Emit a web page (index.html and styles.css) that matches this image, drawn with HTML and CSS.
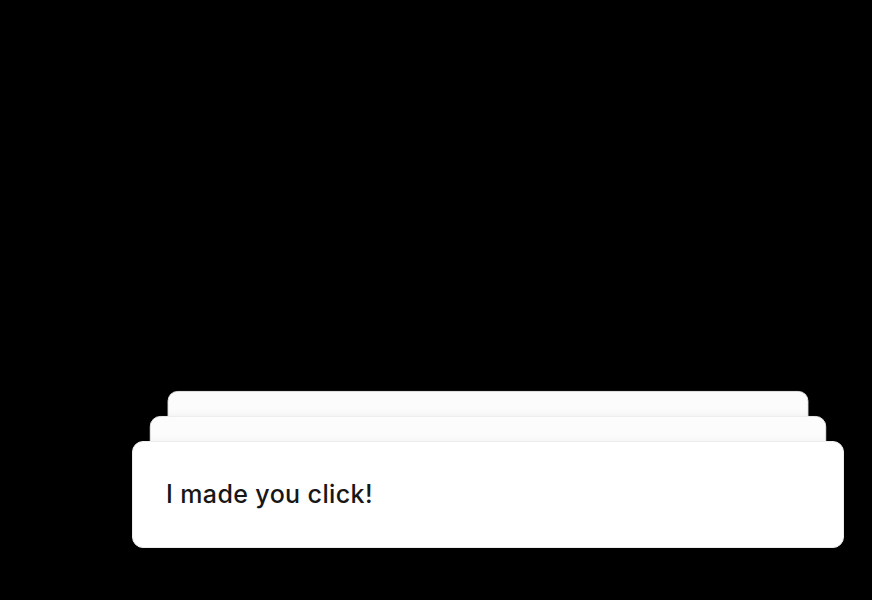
FILE: index.html
```html
<!DOCTYPE html>
<html>
<head>
<meta charset="utf-8">
<link rel="stylesheet" href="styles.css">
</head>
<body>
<main class="stage">
  <ol class="toaster">
    <li class="toast toast-back toast-3"></li>
    <li class="toast toast-back toast-2"></li>
    <li class="toast toast-front">I made you click!</li>
  </ol>
</main>
</body>
</html>
```
FILE: styles.css
```css
html, body {
  margin: 0;
  padding: 0;
  background: #000;
  height: 100%;
}
.stage {
  height: 600px;
  display: flex;
  flex-direction: column;
  justify-content: flex-end;
  padding: 0 28px 52px 132px;
  box-sizing: border-box;
}
.toaster {
  list-style: none;
  margin: 0;
  padding: 0;
  position: relative;
  width: 712px;
}
.toast {
  box-sizing: border-box;
  background: #fff;
  border: 1px solid #ededed;
  border-radius: 11px;
  box-shadow: 0 4px 12px rgba(0, 0, 0, 0.1);
}
.toast-front {
  position: relative;
  z-index: 3;
  height: 107px;
  display: flex;
  align-items: center;
  padding: 0 0 2px 33px;
  font-family: Inter, "Noto Sans", sans-serif;
  font-size: 25px;
  font-weight: 500;
  color: #171717;
  letter-spacing: 0.38px;
}
.toast-back {
  position: absolute;
  left: 0;
  top: 0;
  width: 100%;
  height: 107px;
  transform-origin: top center;
}
.toast-2 {
  z-index: 2;
  transform: translateY(-25px) scale(0.95);
  background: #fcfcfc;
}
.toast-3 {
  z-index: 1;
  transform: translateY(-50px) scale(0.9);
  background: #fcfcfc;
}
```
